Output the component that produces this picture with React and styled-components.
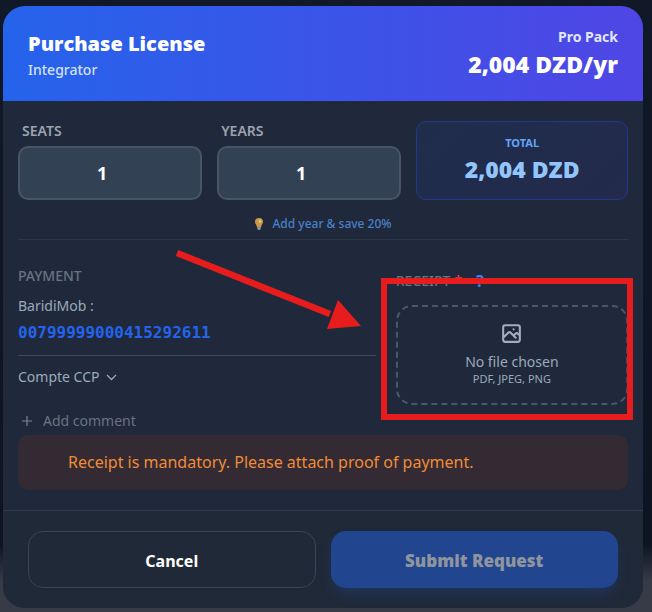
import * as React from "react";
import styled, { createGlobalStyle } from "styled-components";

const GlobalStyle = createGlobalStyle`
  * {
    box-sizing: border-box;
  }
  body {
    margin: 0;
    background: linear-gradient(180deg, #111827 0%, #0f1423 89%, #373b48 95%);
    background-color: #373b48;
    color: #ffffff;
    font-family: "Noto Sans", "Open Sans", sans-serif;
  }
  button,
  input {
    font-family: inherit;
  }
`;

const Page = styled.main`
  padding: 6px 9px 4px 3px;
`;
const Modal = styled.form`
  display: flex;
  flex-direction: column;
  width: 100%;
  border-radius: 22px;
  background-color: #1f293b;
  overflow: hidden;
`;

const Header = styled.header`
  display: flex;
  align-items: center;
  justify-content: space-between;
  gap: 16px;
  padding: 20px 25px;
  background: linear-gradient(90deg, #2563eb 0%, #4f46e5 100%);
`;
const Title = styled.h1`
  margin: 0;
  padding-top: 4px;
  font-family: "Open Sans", sans-serif;
  font-size: 20px;
  line-height: 28px;
  font-weight: 800;
`;
const Subtitle = styled.p`
  margin: 0;
  font-size: 14px;
  line-height: 23px;
  font-weight: 500;
  color: #d3e0fb;
`;
const Plan = styled.div`
  text-align: right;
`;
const PlanName = styled.p`
  margin: 0;
  font-size: 14px;
  line-height: 22px;
  font-weight: 700;
  color: #e0e7ff;
`;
const PlanPrice = styled.p`
  margin: 0;
  font-family: "Open Sans", sans-serif;
  font-size: 23px;
  line-height: 33px;
  font-weight: 800;
`;

const Body = styled.div`
  display: flex;
  flex-direction: column;
  padding: 20px 15px;
`;
const OrderRow = styled.div`
  display: grid;
  grid-template-columns: 1fr 1fr 1.15fr;
  gap: 15px;
`;
const Field = styled.div`
  display: flex;
  flex-direction: column;
  min-width: 0;
`;
const FieldLabel = styled.label`
  padding-left: 4px;
  font-size: 14px;
  line-height: 20px;
  margin-bottom: 5px;
  font-weight: 600;
  color: #9ca3af;
`;
const NumberInput = styled.input`
  width: 100%;
  height: 54px;
  padding: 0 26px 0 10px;
  border: 2px solid #475569;
  border-radius: 10px;
  background-color: #334155;
  color: #ffffff;
  font-size: 18px;
  font-weight: 700;
  text-align: center;
  appearance: textfield;
  &::-webkit-inner-spin-button {
    display: none;
  }
`;
const Total = styled.div`
  display: flex;
  flex-direction: column;
  align-items: center;
  justify-content: center;
  padding-bottom: 2px;
  border: 1px solid #20398b;
  border-radius: 10px;
  background: linear-gradient(135deg, #1f2d4b 0%, #232a4c 100%);
`;
const TotalLabel = styled.span`
  font-size: 11px;
  line-height: 20px;
  font-weight: 700;
  color: #60a5fa;
`;
const TotalValue = styled.strong`
  font-family: "Open Sans", sans-serif;
  font-size: 23px;
  line-height: 33px;
  font-weight: 800;
  color: #93c5fd;
`;
const Hint = styled.p`
  display: flex;
  align-items: center;
  justify-content: center;
  gap: 8px;
  margin: 0;
  padding: 14px 0 5px 0;
  border-bottom: 1px solid #2c3748;
  font-size: 12px;
  line-height: 20px;
  font-weight: 500;
  color: #4a80c8;
`;

const Details = styled.div`
  display: grid;
  grid-template-columns: 1.54fr 1fr;
  gap: 20px;
  padding-top: 24px;
`;
const Payment = styled.section`
  display: flex;
  flex-direction: column;
  align-items: flex-start;
`;
const SectionTitle = styled.h2`
  margin: 0;
  font-size: 14px;
  line-height: 24px;
  font-weight: 500;
  color: #6b7280;
`;
const Method = styled.p`
  margin: 0;
  font-size: 14px;
  line-height: 36px;
  color: #9ca9bc;
`;
const Account = styled.p`
  width: 100%;
  margin: 0;
  padding-bottom: 14px;
  border-bottom: 1px solid #3c4758;
  font-family: "DejaVu Sans Mono", monospace;
  font-size: 16px;
  line-height: 17px;
  font-weight: 700;
  color: #2563eb;
`;
const TextButton = styled.button`
  display: flex;
  align-items: center;
  gap: 5px;
  padding: 0;
  border: 0;
  background: none;
  font-size: 14px;
  line-height: 20px;
  color: ${(props) => props.$color};
  cursor: pointer;
`;
const MethodToggle = styled(TextButton)`
  margin-top: 11px;
`;
const CommentButton = styled(TextButton)`
  align-self: flex-start;
  gap: 8px;
  margin: 6px 0 4px 0;
`;

const Receipt = styled.section`
  position: relative;
  display: flex;
  flex-direction: column;
  padding-top: 5px;
`;
const ReceiptLabel = styled.label`
  display: flex;
  align-items: center;
  gap: 4px;
  margin-bottom: 12px;
  font-size: 14px;
  line-height: 24px;
  font-weight: 500;
  color: #6b7280;
`;
const Required = styled.span`
  color: #ef4444;
`;
const Help = styled.span`
  margin-left: 10px;
  font-size: 16px;
  font-weight: 700;
  color: #3b82f6;
`;
const DropArea = styled.div`
  position: relative;
`;
const DropZone = styled.button`
  display: flex;
  flex-direction: column;
  align-items: center;
  justify-content: center;
  width: 100%;
  height: 100px;
  padding: 0 0 4px 0;
  border: 0;
  background: none;
  color: #9ca9bc;
  font-size: 14px;
  line-height: 20px;
  cursor: pointer;
`;
const DropBorder = styled.svg`
  position: absolute;
  left: 0;
  bottom: 0;
  width: 100%;
  height: 100px;
  pointer-events: none;
  rect {
    width: calc(100% - 2px);
    height: 98px;
  }
`;
const Formats = styled.small`
  font-size: 11px;
  line-height: 14px;
`;
const IconSlot = styled.span`
  display: flex;
  margin-bottom: 6px;
`;

const Highlight = styled.div`
  position: absolute;
  top: 14px;
  right: -5px;
  left: -15px;
  height: 142px;
  border: 6px solid #e71d1d;
  pointer-events: none;
`;
const Arrow = styled.svg`
  position: absolute;
  top: -16px;
  right: calc(100% + 34px);
  width: 190px;
  height: 84px;
  pointer-events: none;
`;

const Alert = styled.p`
  margin: 0;
  padding: 14px 50px;
  border-radius: 10px;
  background-color: #332a33;
  font-size: 16px;
  line-height: 27px;
  color: #f08c38;
`;

const Footer = styled.footer`
  display: grid;
  grid-template-columns: 1fr 1fr;
  gap: 15px;
  padding: 20px 25px;
  border-top: 1px solid #2e3949;
  background-color: #202938;
`;
const FooterButton = styled.button`
  height: 57px;
  padding: 2px 0 0 0;
  border: 1px solid #3a4454;
  border-radius: 15px;
  background: none;
  color: #ffffff;
  font-size: 16px;
  font-weight: 700;
  cursor: pointer;
`;
const SubmitButton = styled(FooterButton)`
  border: 0;
  background-color: #224590;
  color: #8e959f;
  font-family: "Open Sans", sans-serif;
  font-size: 17px;
  font-weight: 800;
  box-shadow: 0 8px 16px -4px rgba(37, 99, 235, 0.24);
`;

const IconBulb = () => (
  <svg width="10" height="14" viewBox="0 0 10 14" aria-hidden="true">
    <path
      d="M5 1a4 4 0 0 0-4 4c0 2 1.6 2.6 1.9 5h4.2C7.4 7.600 9 7 9 5a4 4 0 0 0-4-4z"
      fill="#c89a45"
    />
    <path d="M5 2.500a2.500 2.500 0 0 1 2.500 2.500L5 6z" fill="#e2cc86" />
    <path d="M3.200 10h3.600v2L5.800 13H4.200l-1-1z" fill="#8a8f99" />
  </svg>
);

const IconPhoto = () => (
  <svg
    width="25"
    height="25"
    viewBox="0 0 24 24"
    fill="none"
    stroke="#a3adbb"
    strokeWidth="2"
    strokeLinecap="round"
    strokeLinejoin="round"
    aria-hidden="true"
  >
    <path d="M4 16l4.586-4.586a2 2 0 012.828 0L16 16m-2-2l1.586-1.586a2 2 0 012.828 0L20 14m-6-6h.01M6 20h12a2 2 0 002-2V6a2 2 0 00-2-2H6a2 2 0 00-2 2v12a2 2 0 002 2z" />
  </svg>
);

const IconChevron = () => (
  <svg width="13" height="12" viewBox="0 0 13 12" fill="none" aria-hidden="true">
    <path d="M2 4l4.500 4.500L11 4" stroke="#9ca9bc" strokeWidth="1.300" />
  </svg>
);

const IconPlus = () => (
  <svg width="17" height="12" viewBox="0 0 17 12" fill="none" aria-hidden="true">
    <path d="M9 1v10M4 6h10" stroke="#7d8694" strokeWidth="1.200" />
  </svg>
);

const App = () => (
  <>
    <GlobalStyle />
    <Page>
      <Modal onSubmit={(e) => e.preventDefault()}>
        <Header>
          <div>
            <Title>Purchase License</Title>
            <Subtitle>Integrator</Subtitle>
          </div>
          <Plan>
            <PlanName>Pro Pack</PlanName>
            <PlanPrice>2,004 DZD/yr</PlanPrice>
          </Plan>
        </Header>
        <Body>
          <OrderRow>
            <Field>
              <FieldLabel htmlFor="seats">SEATS</FieldLabel>
              <NumberInput id="seats" type="number" min="1" defaultValue="1" />
            </Field>
            <Field>
              <FieldLabel htmlFor="years">YEARS</FieldLabel>
              <NumberInput id="years" type="number" min="1" defaultValue="1" />
            </Field>
            <Total>
              <TotalLabel>TOTAL</TotalLabel>
              <TotalValue>2,004 DZD</TotalValue>
            </Total>
          </OrderRow>
          <Hint>
            <IconBulb />
            Add year &amp; save 20%
          </Hint>
          <Details>
            <Payment>
              <SectionTitle>PAYMENT</SectionTitle>
              <Method>BaridiMob :</Method>
              <Account>00799999000415292611</Account>
              <MethodToggle type="button" $color="#9ca9bc">
                Compte CCP <IconChevron />
              </MethodToggle>
            </Payment>
            <Receipt>
              <ReceiptLabel htmlFor="receipt">
                RECEIPT <Required>*</Required>
                <Help>?</Help>
              </ReceiptLabel>
              <DropArea>
                <DropBorder aria-hidden="true">
                  <rect
                    x="1"
                    y="1"
                    rx="15"
                    fill="none"
                    stroke="#4b5768"
                    strokeWidth="2"
                    strokeDasharray="6 4"
                  />
                </DropBorder>
                <DropZone id="receipt" type="button">
                  <IconSlot>
                    <IconPhoto />
                  </IconSlot>
                  No file chosen
                  <Formats>PDF, JPEG, PNG</Formats>
                </DropZone>
              </DropArea>
              <Highlight />
              <Arrow viewBox="0 0 190 84" aria-hidden="true">
                <path d="M5 5l153 61" stroke="#e71d1d" strokeWidth="6.500" />
                <path d="M166 52l23 26-34 3z" fill="#e71d1d" />
              </Arrow>
            </Receipt>
          </Details>
          <CommentButton type="button" $color="#6b7280">
            <IconPlus /> Add comment
          </CommentButton>
          <Alert role="alert">
            Receipt is mandatory. Please attach proof of payment.
          </Alert>
        </Body>
        <Footer>
          <FooterButton type="button">Cancel</FooterButton>
          <SubmitButton type="submit">Submit Request</SubmitButton>
        </Footer>
      </Modal>
    </Page>
  </>
);

export default App;
